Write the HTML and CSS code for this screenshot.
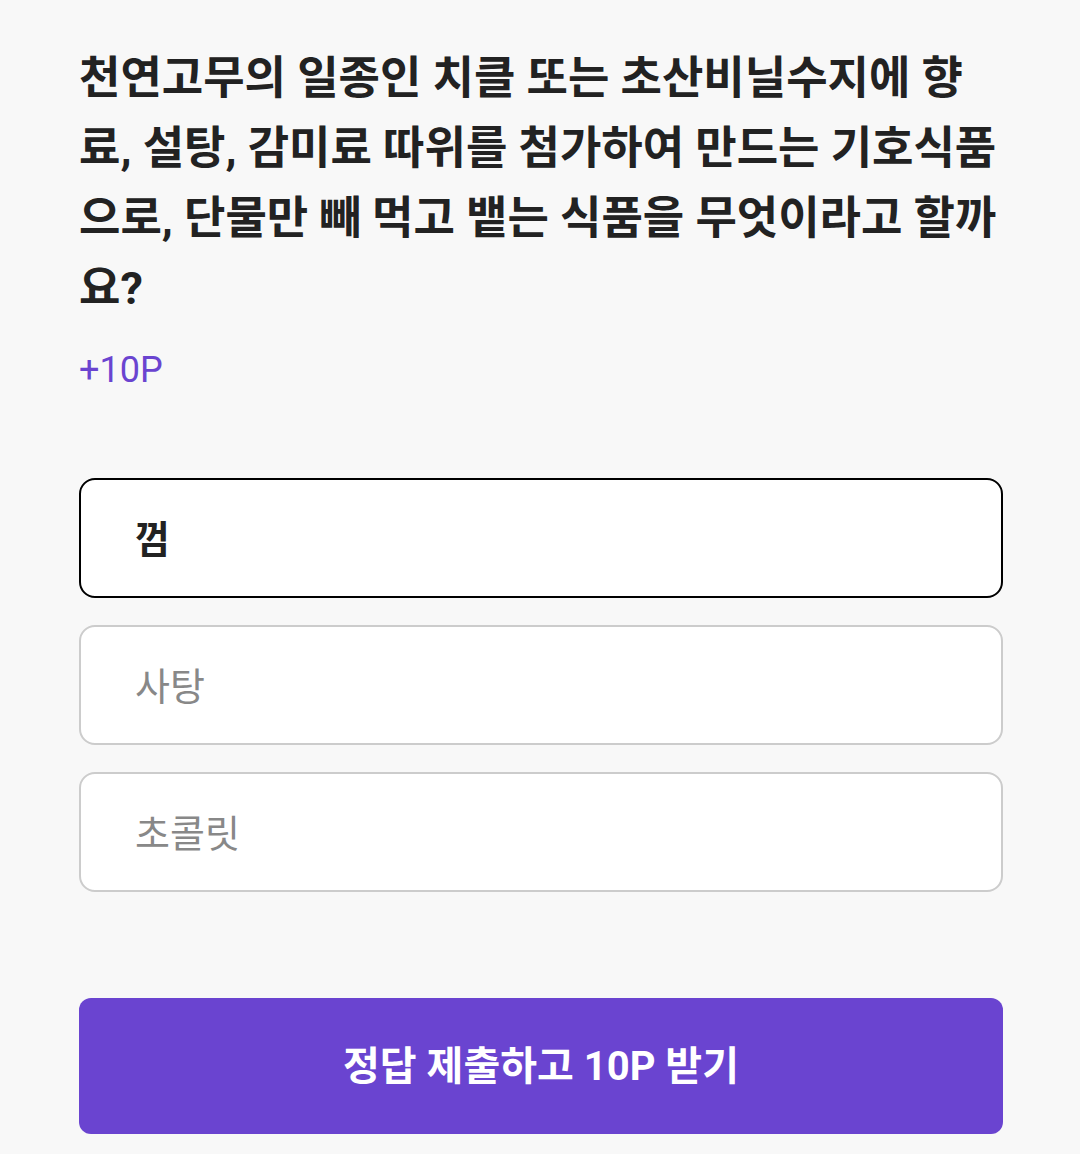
FILE: index.html
```html
<!DOCTYPE html>
<html lang="ko">
<head>
    <meta charset="UTF-8">
    <meta name="viewport" content="width=device-width, initial-scale=1.0">
    <title>퀴즈</title>
    <link rel="stylesheet" href="styles.css">
</head>
<body>

<div class="quiz">
    <h2 class="question">천연고무의 일종인 치클 또는 초산비닐수지에 향료, 설탕, 감미료 따위를 첨가하여 만드는 기호식품으로, 단물만 빼 먹고 뱉는 식품을 무엇이라고 할까요?</h2>
    <div class="point">+10P</div>

    <div class="options">
        <button class="option selected" type="button">껌</button>
        <button class="option" type="button">사탕</button>
        <button class="option" type="button">초콜릿</button>
    </div>

    <button class="submit" type="button">정답 제출하고 10P 받기</button>
</div>

</body>
</html>
```

FILE: styles.css
```css
body {
    font-family: Roboto, "Noto Sans CJK KR", sans-serif;
    margin: 0;
    background: #f8f8f8;
    color: #222;
}
.quiz {
    width: 924px;
    padding: 44px 0 20px 79px;
}
.question {
    margin: 0 -10px 0 0;
    font-size: 45px;
    font-weight: bold;
    line-height: 70px;
}
.point {
    margin-top: 21px;
    font-size: 36px;
    line-height: 50px;
    color: #6a44d0;
}
.options {
    display: flex;
    flex-direction: column;
    gap: 27px;
    margin-top: 83px;
}
.option {
    height: 120px;
    padding: 0 0 4px 54px;
    text-align: left;
    font-family: inherit;
    font-size: 38px;
    color: #888;
    background: #fff;
    border: 2px solid #cccccc;
    border-radius: 16px;
    outline: none;
    cursor: pointer;
}
.option.selected {
    border-color: #000;
    color: #222;
    font-weight: bold;
}
.submit {
    width: 100%;
    height: 136px;
    margin-top: 106px;
    padding: 0 0 6px;
    font-family: inherit;
    font-size: 40px;
    font-weight: bold;
    color: #fff;
    background: #6a44d0;
    border: none;
    border-radius: 12px;
    cursor: pointer;
}
```
